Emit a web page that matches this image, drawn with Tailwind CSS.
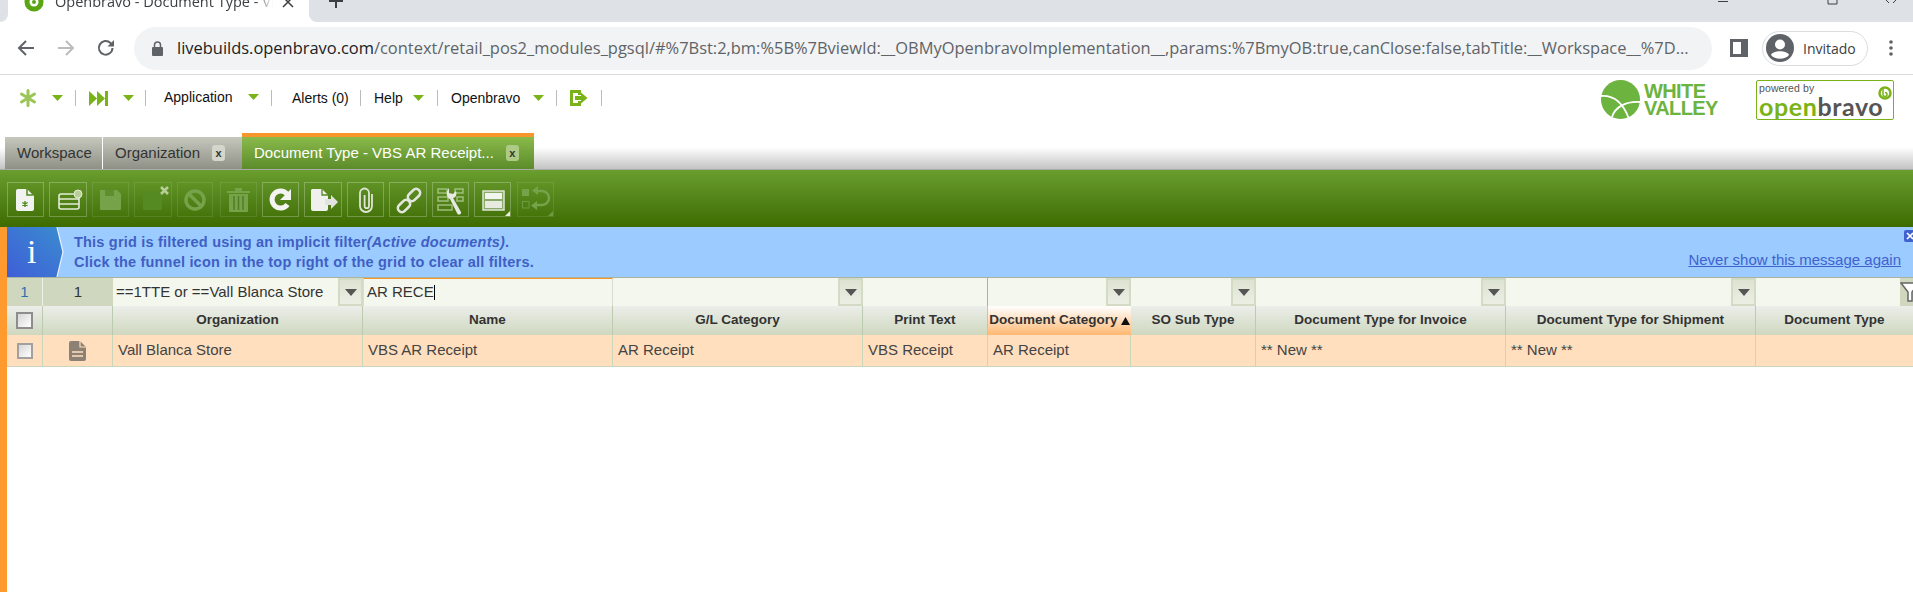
<!DOCTYPE html>
<html lang="es">
<head>
<meta charset="utf-8">
<title>Openbravo - Document Type</title>
<script src="https://cdn.jsdelivr.net/npm/@tailwindcss/browser@4"></script>
</head>
<body class="m-0 h-[592px] w-[1913px] overflow-hidden bg-white font-['Liberation_Sans',Arial,sans-serif] flex flex-col">

<!-- browser tab strip -->
<div class="h-[22px] shrink-0 flex overflow-hidden bg-white">
  <div class="w-[8px] bg-[#dee1e6] rounded-br-lg"></div>
  <div class="w-[301px] relative flex items-center pl-[16px] font-['Open_Sans',sans-serif] text-[14.5px] text-[#3c4043] -mt-[19px] h-[41px]">
    <svg width="20" height="20" viewBox="0 0 20 20" class="shrink-0"><circle cx="10" cy="10" r="9.5" fill="#5aa512"/><circle cx="10" cy="10" r="4.5" fill="#fff"/><circle cx="10" cy="10" r="2" fill="#5aa512"/></svg>
    <span class="ml-[11px] w-[218px] overflow-hidden whitespace-nowrap [mask-image:linear-gradient(to_right,black_92%,transparent)]">Openbravo - Document Type - VBS</span>
    <svg width="12" height="12" viewBox="0 0 12 12" class="ml-[9px]"><path d="M1 1l10 10M11 1L1 11" stroke="#3c4043" stroke-width="1.5"/></svg>
  </div>
  <div class="flex-1 bg-[#dee1e6] rounded-bl-lg relative flex">
    <svg width="14" height="14" viewBox="0 0 14 14" class="ml-[20px] -mt-[6px]"><path d="M7 0v14M0 7h14" stroke="#3c4043" stroke-width="2"/></svg>
    <div class="ml-auto flex items-start pr-[16px]">
      <svg width="12" height="4" viewBox="0 0 12 4" class="mr-[98px]"><path d="M1 1.5h10" stroke="#3c4043"/></svg>
      <svg width="14" height="5" viewBox="0 0 14 5" class="mr-[44px]"><path d="M1 0v4h9V0" stroke="#3c4043" fill="none"/></svg>
      <svg width="12" height="4" viewBox="0 0 12 4"><path d="M1 0l3 3M11 0L8 3" stroke="#3c4043"/></svg>
    </div>
  </div>
</div>

<!-- address row -->
<div class="h-[53px] shrink-0 flex items-center border-b border-[#dadce0] bg-white">
  <svg width="18" height="18" viewBox="0 0 18 18" class="ml-[17px]"><path d="M17 9H2M9 2L2 9l7 7" fill="none" stroke="#5f6368" stroke-width="2"/></svg>
  <svg width="18" height="18" viewBox="0 0 18 18" class="ml-[22px]"><path d="M1 9h15M9 2l7 7-7 7" fill="none" stroke="#babcbe" stroke-width="2"/></svg>
  <svg width="18" height="18" viewBox="0 0 18 18" class="ml-[22px]"><path d="M15.5 9A6.8 6.8 0 1 1 13.5 4L16 6" fill="none" stroke="#5f6368" stroke-width="2"/><path d="M17 1v6.500h-6.500z" fill="#5f6368"/></svg>
  <div class="ml-[19px] w-[1578px] h-[43px] rounded-full bg-[#f1f3f4] flex items-center pl-[18px] overflow-hidden">
    <svg width="11" height="15" viewBox="0 0 11 15" class="shrink-0"><path d="M2.500 6V4a3 3 0 0 1 6 0v2" fill="none" stroke="#5f6368" stroke-width="1.500"/><rect y="6" width="11" height="9" rx="1" fill="#5f6368"/></svg>
    <span class="ml-[14px] font-['Open_Sans',sans-serif] text-[16.45px] whitespace-nowrap text-[#5f6368]"><span class="text-[#202124]">livebuilds.openbravo.com</span>/context/retail_pos2_modules_pgsql/#%7Bst:2,bm:%5B%7BviewId:__OBMyOpenbravoImplementation__,params:%7BmyOB:true,canClose:false,tabTitle:__Workspace__%7D...</span>
  </div>
  <svg width="18" height="18" viewBox="0 0 18 18" class="ml-[18px]"><path d="M0 0h18v18H0z" fill="#5f6368"/><path d="M3 3h8v12H3z" fill="#fff"/></svg>
  <div class="ml-[14px] w-[106px] h-[35px] rounded-full border border-[#dadce0] flex items-center pl-[3px]">
    <svg width="28" height="28" viewBox="0 0 28 28" class="shrink-0"><circle cx="14" cy="14" r="14" fill="#5f6368"/><circle cx="14" cy="10.500" r="5" fill="#fff"/><path d="M5 21c2-5 16-5 18 0-4 5-14 5-18 0z" fill="#fff"/></svg>
    <span class="ml-[9px] font-['Open_Sans',sans-serif] text-[14px] text-[#3c4043]">Invitado</span>
  </div>
  <svg width="4" height="16" viewBox="0 0 4 16" class="ml-[21px]"><circle cx="2" cy="2" r="1.800" fill="#5f6368"/><circle cx="2" cy="8" r="1.800" fill="#5f6368"/><circle cx="2" cy="14" r="1.800" fill="#5f6368"/></svg>
</div>

<!-- application menu -->
<div class="h-[58px] shrink-0 flex items-center pb-[12px] text-[14px] text-[#111] relative">
  <svg width="18" height="18" viewBox="0 0 18 18" class="ml-[19px]"><g stroke="#9bc557" stroke-width="3" stroke-linecap="round"><path d="M9 9V1.500M9 9V16.500M9 9L2.500 5M9 9l6.500-4M9 9l-6.500 4M9 9l6.500 4"/></g></svg>
  <svg width="11" height="6" viewBox="0 0 11 6" class="ml-[15px]"><path d="M0 0h11L5.500 6z" fill="#7ab317"/></svg>
  <span class="ml-[12px] h-[16px] w-px bg-[#bbb]"></span>
  <svg width="19" height="17" viewBox="0 0 19 17" class="ml-[13px]"><path d="M0 1l8 7.500L0 16zM8 1l8 7.500L8 16zM16 1h3v15h-3z" fill="#7ab317"/></svg>
  <svg width="11" height="6" viewBox="0 0 11 6" class="ml-[15px]"><path d="M0 0h11L5.500 6z" fill="#7ab317"/></svg>
  <span class="ml-[11px] h-[16px] w-px bg-[#bbb]"></span>
  <span class="ml-[18px] -mt-[2px] w-[66px] whitespace-nowrap">Application</span>
  <svg width="11" height="6" viewBox="0 0 11 6" class="ml-[18px] -mt-[2px]"><path d="M0 0h11L5.500 6z" fill="#7ab317"/></svg>
  <span class="ml-[12px] h-[16px] w-px bg-[#bbb]"></span>
  <span class="ml-[20px] w-[56px] whitespace-nowrap">Alerts (0)</span>
  <span class="ml-[12px] h-[16px] w-px bg-[#bbb]"></span>
  <span class="ml-[13px] w-[27px]">Help</span>
  <svg width="11" height="6" viewBox="0 0 11 6" class="ml-[12px]"><path d="M0 0h11L5.500 6z" fill="#7ab317"/></svg>
  <span class="ml-[13px] h-[16px] w-px bg-[#bbb]"></span>
  <span class="ml-[13px] w-[68px]">Openbravo</span>
  <svg width="11" height="6" viewBox="0 0 11 6" class="ml-[14px]"><path d="M0 0h11L5.500 6z" fill="#7ab317"/></svg>
  <span class="ml-[12px] h-[16px] w-px bg-[#bbb]"></span>
  <svg width="18" height="16" viewBox="0 0 18 16" class="ml-[13px]"><path d="M9.500 5V1.500h-8v13h8V11" fill="none" stroke="#7ab317" stroke-width="3"/><path d="M5 6h6V2.500L17.500 8 11 13.500V10H5z" fill="#7ab317"/></svg>
  <span class="ml-[13px] h-[16px] w-px bg-[#bbb]"></span>

  <div class="ml-auto flex items-center mt-[3px]">
    <svg width="39" height="39" viewBox="0 0 39 39"><ellipse cx="19.500" cy="19.500" rx="19.500" ry="19.500" fill="#6db33f"/><path d="M0 16c14-1 23 9 28 23M11 37c3-10 14-16 28-15" fill="none" stroke="#fff" stroke-width="1.800"/></svg>
    <div class="ml-[4px] w-[74px] text-[#6db33f] font-bold text-[20px] leading-[17px] tracking-[-0.6px]">WHITE<br>VALLEY</div>
    <div class="ml-[38px] mr-[19px] w-[138px] h-[40px] border border-[#7ab317] rounded-[2px] relative overflow-hidden">
      <div class="absolute left-[2px] top-[1px] text-[10.500px] leading-[12px] text-[#555] tracking-[0.1px]">powered by</div>
      <div class="absolute left-[2px] top-[14px] text-[25px] leading-[22px] font-bold font-['Lato',sans-serif] tracking-[0.6px] text-[#555]"><span class="text-[#7ab317]">open</span>bravo</div>
      <svg width="14" height="14" viewBox="0 0 14 14" class="absolute right-[1px] top-[5px]"><circle cx="7" cy="7" r="5.500" fill="none" stroke="#7ab317" stroke-width="2.500"/><path d="M5 1v7.500a2 2 0 1 0 2-2" fill="none" stroke="#7ab317" stroke-width="1.500"/></svg>
    </div>
  </div>
</div>

<!-- application tabs -->
<div class="h-[37px] shrink-0 flex items-end bg-linear-to-b from-white from-40% to-[#c4c4c4] text-[15px] border-b border-[#aaa]">
  <div class="ml-[5px] w-[98px] h-[32px] pl-[12px] flex items-center bg-linear-to-b from-[#c6c8be] to-[#8f9187] text-[#333] border-r border-white">Workspace</div>
  <div class="w-[139px] h-[32px] pl-[12px] flex items-center bg-linear-to-b from-[#c6c8be] to-[#8f9187] text-[#333]">
    <span>Organization</span>
    <span class="ml-[12px] w-[13px] h-[16px] rounded-[3px] bg-[#d4d6cc] text-[#333] text-[11px] font-bold flex items-center justify-center">x</span>
  </div>
  <div class="w-[292px] h-[36px] pl-[12px] flex items-center border-t-4 border-[#f7962d] bg-linear-to-b from-[#8bb94b] to-[#5b8c2a] text-white">
    <span class="whitespace-nowrap">Document Type - VBS AR Receipt...</span>
    <span class="ml-[12px] w-[13px] h-[16px] rounded-[3px] bg-[#aecb85] text-[#333] text-[11px] font-bold flex items-center justify-center">x</span>
  </div>
</div>

<!-- toolbar -->
<div class="h-[57px] shrink-0 flex items-center gap-[5px] pl-[7px] pt-[1px] bg-linear-to-b from-[#6a9e2e] to-[#3d6b00]">
  <div class="w-[37px] h-[35px] border border-white/25">
    <svg width="35" height="33" viewBox="0 0 35 33"><path d="M10 6h9l7 7v13a2 2 0 0 1-2 2H10a2 2 0 0 1-2-2V8a2 2 0 0 1 2-2z" fill="#f2f2f0"/><path d="M19 6v6h6" fill="none" stroke="#4f8a1f" stroke-width="1.500"/><path d="M17 18v6M14.300 19.500l5.400 3M19.700 19.500l-5.400 3" stroke="#4f8a1f" stroke-width="1.400"/></svg>
  </div>
  <div class="w-[38px] h-[35px] border border-white/25">
    <svg width="36" height="33" viewBox="0 0 36 33"><rect x="9" y="11" width="20" height="15" rx="2" fill="none" stroke="#e4ecd8" stroke-width="1.600"/><path d="M9 16h20M9 21h20" stroke="#e4ecd8" stroke-width="1.600"/><circle cx="28" cy="11" r="4" fill="#b8cf98" stroke="#e4ecd8"/></svg>
  </div>
  <div class="w-[37px] h-[35px] border border-white/10">
    <svg width="35" height="33" viewBox="0 0 35 33"><path d="M8 7h16l4 4v15a1 1 0 0 1-1 1H8a1 1 0 0 1-1-1V8a1 1 0 0 1 1-1z" fill="#76a24a"/><path d="M12 7h9v6h-9z" fill="#5d8f2e"/></svg>
  </div>
  <div class="w-[38px] h-[35px] border border-white/10">
    <svg width="36" height="33" viewBox="0 0 36 33"><rect x="8" y="8" width="19" height="19" rx="1" fill="#558a22"/><path d="M26 4l7 7M33 4l-7 7" stroke="#b9cf9b" stroke-width="2.500"/></svg>
  </div>
  <div class="w-[36px] h-[35px] border border-white/10">
    <svg width="34" height="33" viewBox="0 0 34 33"><circle cx="17" cy="17" r="9" fill="none" stroke="#76a24a" stroke-width="3.500"/><path d="M11 11l12 12" stroke="#76a24a" stroke-width="3.500"/></svg>
  </div>
  <div class="ml-[2px] w-[37px] h-[35px] border border-white/10">
    <svg width="35" height="33" viewBox="0 0 35 33"><path d="M6 8h23v2H6zM14 5h7v3h-7z" fill="#76a24a"/><path d="M8 11h19v17a1 1 0 0 1-1 1H9a1 1 0 0 1-1-1z" fill="#76a24a"/><path d="M13 13v14M17.500 13v14M22 13v14" stroke="#517f25" stroke-width="1.500"/></svg>
  </div>
  <div class="w-[37px] h-[35px] border border-white/25">
    <svg width="35" height="33" viewBox="0 0 35 33"><path d="M24.500 21.500A8.500 8.500 0 1 1 24 11" fill="none" stroke="#f4f4f2" stroke-width="5"/><path d="M28 6v11h-11z" fill="#f4f4f2"/></svg>
  </div>
  <div class="w-[38px] h-[35px] border border-white/25">
    <svg width="36" height="33" viewBox="0 0 36 33"><path d="M7 6h10l6 6v4h-3v6h3v4a2 2 0 0 1-2 2H8a2 2 0 0 1-2-2V7z" fill="#f0f0ee"/><path d="M17 6v6h6" fill="none" stroke="#4f8a1f" stroke-width="1.300"/><path d="M20 16h6v-4l7 7-7 7v-4h-6z" fill="#e2e2e0"/></svg>
  </div>
  <div class="w-[37px] h-[35px] border border-white/25">
    <svg width="35" height="33" viewBox="0 0 35 33"><path d="M24 11v12a6 6 0 0 1-12 0V10a4.500 4.500 0 0 1 9 0v13a2.200 2.200 0 0 1-4.400 0V12" fill="none" stroke="#dfe5d6" stroke-width="1.800"/></svg>
  </div>
  <div class="w-[38px] h-[35px] border border-white/25">
    <svg width="36" height="33" viewBox="0 0 36 33"><g fill="none" stroke="#e3e6dd" stroke-width="2.600"><rect x="7" y="19" width="14" height="8" rx="4" transform="rotate(-45 14 23)"/><rect x="17" y="8" width="14" height="8" rx="4" transform="rotate(-45 24 12)"/></g></svg>
  </div>
  <div class="w-[37px] h-[35px] border border-white/25">
    <svg width="35" height="33" viewBox="0 0 35 33"><g fill="none" stroke="#9ebd7c" stroke-width="1.500"><rect x="5" y="6" width="9" height="4"/><rect x="22" y="6" width="8" height="4"/><rect x="5" y="14" width="10" height="4"/><rect x="5" y="22" width="14" height="5"/><rect x="24" y="14" width="6" height="4"/></g><path d="M16 5v5l4 1 3-3c1 3 0 7-3 7l8 14c.8 2-2 3.500-3.500 2L17 16c-3-1-5-6-1-11z" fill="#e7e9e2"/></svg>
  </div>
  <div class="w-[37px] h-[35px] border border-white/25 relative">
    <svg width="35" height="33" viewBox="0 0 35 33"><rect x="8" y="8" width="21" height="19" fill="#8aa86a" stroke="#dfe6d4" stroke-width="1.500"/><rect x="10" y="10" width="17" height="6" fill="#f2f4ee"/><rect x="10" y="18" width="17" height="7" fill="#e6eadf"/></svg>
    <span class="absolute right-0 bottom-0 w-0 h-0 border-l-[5px] border-b-[5px] border-l-transparent border-b-[#e9efe0]"></span>
  </div>
  <div class="ml-px w-[37px] h-[35px] border border-white/10 relative">
    <svg width="35" height="33" viewBox="0 0 35 33"><rect x="4" y="6" width="7" height="7" fill="#76a24a"/><rect x="4.500" y="18.500" width="6.500" height="6.500" fill="none" stroke="#6d9b41"/><path d="M18 8h6a7 7 0 0 1 0 14h-7" fill="none" stroke="#76a24a" stroke-width="2.500"/><path d="M20 3v9l-6-4.500zM19 18v9l-6-4.500z" fill="#76a24a"/></svg>
    <span class="absolute right-0 bottom-0 w-0 h-0 border-l-[5px] border-b-[5px] border-l-transparent border-b-[#6d9b41]"></span>
  </div>
</div>

<!-- window body -->
<div class="flex-1 flex min-h-0">
  <div class="w-[7px] shrink-0 bg-[#ff9a2e]"></div>
  <div class="flex-1 min-w-0 flex flex-col">
    <!-- message bar -->
    <div class="h-[50px] shrink-0 bg-[#9ccbff] flex relative">
      <div class="w-[58px] h-full relative shrink-0">
        <svg width="58" height="50" viewBox="0 0 58 50" class="absolute inset-0"><defs><linearGradient id="mb" x1="1" y1="0" x2="0" y2="1"><stop offset="0" stop-color="#3a8ccf"/><stop offset="1" stop-color="#3f5ed8"/></linearGradient></defs><path d="M0 0h50l6 25-6 25H0z" fill="url(#mb)"/><path d="M50 0l6 25-6 25" fill="none" stroke="#e8f1ff" stroke-width="1.200"/></svg>
        <span class="absolute left-[20px] top-[6px] font-['Liberation_Serif',serif] text-white text-[34px] leading-[38px]">i</span>
      </div>
      <div class="ml-[9px] pt-[5px] text-[14.5px] leading-[20px] font-bold text-[#3f5fc4] whitespace-nowrap tracking-[0.2px]">
        <div>This grid is filtered using an implicit filter<em class="italic">(Active documents)</em>.</div>
        <div>Click the funnel icon in the top right of the grid to clear all filters.</div>
      </div>
      <a class="absolute right-[12px] top-[24px] text-[15px] leading-[18px] underline text-[#3f62cf]">Never show this message again</a>
      <svg width="9" height="12" viewBox="0 0 9 12" class="absolute right-0 top-[3px]"><rect width="12" height="12" rx="2" fill="#3f62cf"/><path d="M3 3l6 6M9 3L3 9" stroke="#fff" stroke-width="1.600"/></svg>
    </div>

    <!-- grid -->
    <div class="border-t border-[#aab2a0] grid grid-cols-[36px_70px_250px_250px_250px_125px_143px_125px_250px_250px_157px] grid-rows-[28px_29px_32px] text-[15px] text-[#444] overflow-hidden">
      <!-- filter row -->
      <div class="bg-[#cfd8bf] flex items-center justify-center text-[#2f6fb0] border-r border-[#eef1e8]">1</div>
      <div class="bg-[#cfd8bf] flex items-center justify-center text-[#333]">1</div>
      <div class="bg-[#f4f7ee] flex items-center pl-[3px] text-[#333] relative whitespace-nowrap">==1TTE or ==Vall Blanca Store
        <span class="absolute right-0 top-0 w-[25px] h-full border-2 border-[#d3dbc5] bg-linear-to-b from-[#dde3d2] to-[#eceee4] flex items-center justify-center"><svg width="12" height="7" viewBox="0 0 12 7"><path d="M0 0h12L6 7z" fill="#555"/></svg></span></div>
      <div class="bg-[#f4f7ee] flex items-center pl-[3px] text-[#333] border-t border-[#f7962d] border-r border-l border-l-[#d8decd] border-r-[#d8decd]">AR RECE<span class="inline-block w-px h-[15px] bg-black"></span></div>
      <div class="bg-[#f4f7ee] relative"><span class="absolute right-0 top-0 w-[25px] h-full border-2 border-[#d3dbc5] bg-linear-to-b from-[#dde3d2] to-[#eceee4] flex items-center justify-center"><svg width="12" height="7" viewBox="0 0 12 7"><path d="M0 0h12L6 7z" fill="#555"/></svg></span></div>
      <div class="bg-[#f4f7ee] border-r border-[#aab2a0]"></div>
      <div class="bg-[#f4f7ee] relative"><span class="absolute right-0 top-0 w-[25px] h-full border-2 border-[#d3dbc5] bg-linear-to-b from-[#dde3d2] to-[#eceee4] flex items-center justify-center"><svg width="12" height="7" viewBox="0 0 12 7"><path d="M0 0h12L6 7z" fill="#555"/></svg></span></div>
      <div class="bg-[#f4f7ee] relative"><span class="absolute right-0 top-0 w-[25px] h-full border-2 border-[#d3dbc5] bg-linear-to-b from-[#dde3d2] to-[#eceee4] flex items-center justify-center"><svg width="12" height="7" viewBox="0 0 12 7"><path d="M0 0h12L6 7z" fill="#555"/></svg></span></div>
      <div class="bg-[#f4f7ee] relative"><span class="absolute right-0 top-0 w-[25px] h-full border-2 border-[#d3dbc5] bg-linear-to-b from-[#dde3d2] to-[#eceee4] flex items-center justify-center"><svg width="12" height="7" viewBox="0 0 12 7"><path d="M0 0h12L6 7z" fill="#555"/></svg></span></div>
      <div class="bg-[#f4f7ee] relative"><span class="absolute right-0 top-0 w-[25px] h-full border-2 border-[#d3dbc5] bg-linear-to-b from-[#dde3d2] to-[#eceee4] flex items-center justify-center"><svg width="12" height="7" viewBox="0 0 12 7"><path d="M0 0h12L6 7z" fill="#555"/></svg></span></div>
      <div class="bg-[#f4f7ee] relative"><span class="absolute right-0 top-0 w-[13px] h-full bg-[#cfd8bf] overflow-hidden"><svg width="20" height="20" viewBox="0 0 20 20" class="mt-[4px]"><path d="M1 1h18l-7 9v9h-4v-9z" fill="#fff" stroke="#666" stroke-width="1.500"/></svg></span></div>

      <!-- header row -->
      <div class="bg-linear-to-b from-[#eceeea] to-[#cfd8bf] flex items-center justify-center border-r border-[#bccbb0]"><span class="w-[17px] h-[17px] border-2 border-[#8d8d8d] bg-linear-to-br from-[#d6d6d6] to-white"></span></div>
      <div class="bg-linear-to-b from-[#eceeea] to-[#cfd8bf] border-r border-[#bccbb0]"></div>
      <div class="bg-linear-to-b from-[#eceeea] to-[#cfd8bf] border-r border-[#bccbb0] flex items-center justify-center font-bold text-[13.5px] text-[#333]">Organization</div>
      <div class="bg-linear-to-b from-[#eceeea] to-[#cfd8bf] border-r border-[#bccbb0] flex items-center justify-center font-bold text-[13.5px] text-[#333]">Name</div>
      <div class="bg-linear-to-b from-[#eceeea] to-[#cfd8bf] border-r border-[#bccbb0] flex items-center justify-center font-bold text-[13.5px] text-[#333]">G/L Category</div>
      <div class="bg-linear-to-b from-[#eceeea] to-[#cfd8bf] border-r border-[#bccbb0] flex items-center justify-center font-bold text-[13.5px] text-[#333]">Print Text</div>
      <div class="bg-linear-to-b from-white to-[#ffb870] flex items-center justify-center font-bold text-[13.5px] text-[#333] whitespace-nowrap">Document Category<svg width="9" height="8" viewBox="0 0 9 8" class="ml-[3px] shrink-0"><path d="M0 8h9L4.500 0z" fill="#111"/></svg></div>
      <div class="bg-linear-to-b from-[#eceeea] to-[#cfd8bf] border-r border-[#bccbb0] flex items-center justify-center font-bold text-[13.5px] text-[#333]">SO Sub Type</div>
      <div class="bg-linear-to-b from-[#eceeea] to-[#cfd8bf] border-r border-[#bccbb0] flex items-center justify-center font-bold text-[13.5px] text-[#333]">Document Type for Invoice</div>
      <div class="bg-linear-to-b from-[#eceeea] to-[#cfd8bf] border-r border-[#bccbb0] flex items-center justify-center font-bold text-[13.5px] text-[#333]">Document Type for Shipment</div>
      <div class="bg-linear-to-b from-[#eceeea] to-[#cfd8bf] flex items-center justify-center font-bold text-[13.5px] text-[#333]">Document Type</div>

      <!-- data row -->
      <div class="bg-[#ffdfbd] border-r border-b border-[#c9d6ba] flex items-center justify-center"><span class="w-[16px] h-[16px] border-2 border-[#a0a0a0] bg-linear-to-br from-[#d6d6d6] to-white"></span></div>
      <div class="bg-[#ffdfbd] border-r border-b border-[#c9d6ba] flex items-center justify-center"><svg width="17" height="20" viewBox="0 0 17 20"><path d="M2 0h9l6 6v12a2 2 0 0 1-2 2H2a2 2 0 0 1-2-2V2a2 2 0 0 1 2-2z" fill="#8d8176"/><path d="M11 0v6h6" fill="none" stroke="#ffdfbd" stroke-width="1.200"/><path d="M3 11h11M3 15h11" stroke="#ffdfbd" stroke-width="1.500"/></svg></div>
      <div class="bg-[#ffdfbd] border-r border-b border-[#c9d6ba] flex items-center pl-[5px]">Vall Blanca Store</div>
      <div class="bg-[#ffdfbd] border-r border-b border-[#c9d6ba] flex items-center pl-[5px]">VBS AR Receipt</div>
      <div class="bg-[#ffdfbd] border-r border-b border-[#c9d6ba] flex items-center pl-[5px]">AR Receipt</div>
      <div class="bg-[#ffdfbd] border-r border-b border-[#c9d6ba] flex items-center pl-[5px]">VBS Receipt</div>
      <div class="bg-[#ffdfbd] border-r border-b border-[#c9d6ba] flex items-center pl-[5px]">AR Receipt</div>
      <div class="bg-[#ffdfbd] border-r border-b border-[#c9d6ba]"></div>
      <div class="bg-[#ffdfbd] border-r border-b border-[#c9d6ba] flex items-center pl-[5px]">** New **</div>
      <div class="bg-[#ffdfbd] border-r border-b border-[#c9d6ba] flex items-center pl-[5px]">** New **</div>
      <div class="bg-[#ffdfbd] border-b border-[#c9d6ba]"></div>
    </div>
  </div>
</div>
</body>
</html>
